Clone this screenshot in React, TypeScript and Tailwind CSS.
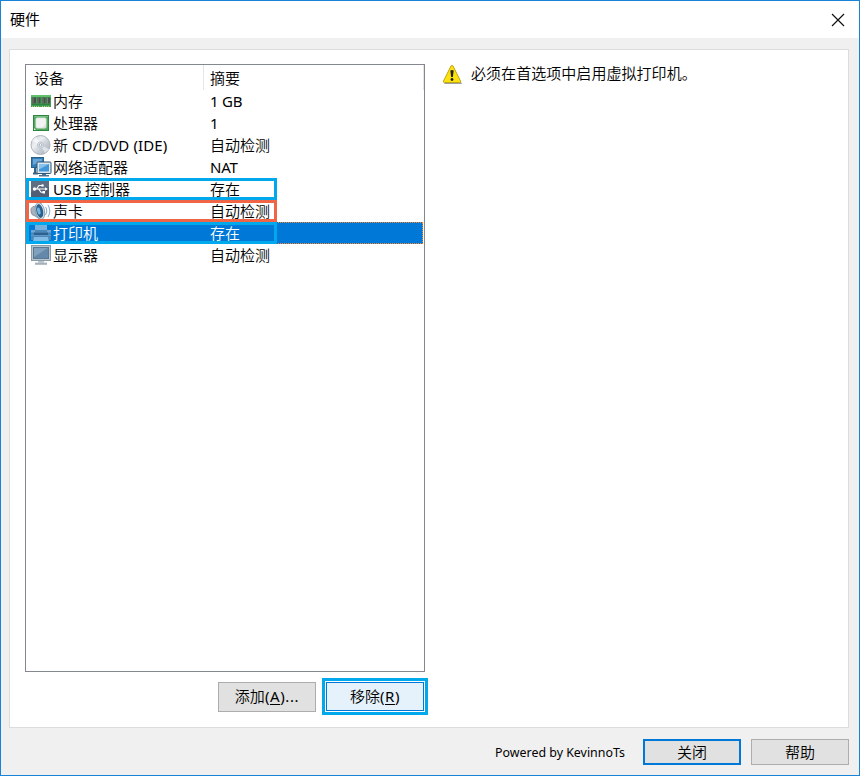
import type { ReactNode } from 'react'

type Device = {
  name: string
  summary: string
  icon: ReactNode
  outline?: string
  selected?: boolean
}

function MemoryIcon() {
  return (
    <svg width="22" height="22" viewBox="0 0 22 22">
      <path d="M1 5h20v12H1z" fill="#3f9b50" />
      <path d="M1 5h20v2H1z" fill="#62bf6c" />
      <path d="M2 7.500h4v6H2zM7 7.500h3.500v6H7zM12 7.500h3.500v6H12zM16.500 7.500h3.500v6h-3.500z" fill="#48504a" />
      <path d="M3 7.500v6M8 7.500v6M13 7.500v6M17.500 7.500v6" stroke="#778078" />
      <path d="M2 14.500h18" stroke="#2b8541" />
      <path d="M2 16.500h8M12 16.500h8" stroke="#b7c987" strokeDasharray="1 1" />
    </svg>
  )
}

function ProcessorIcon() {
  return (
    <svg width="22" height="22" viewBox="0 0 22 22">
      <rect x="3.500" y="3.500" width="15" height="15" fill="#51a85c" stroke="#2f8542" />
      <path d="M4 4.500h14" stroke="#77bd7d" />
      <rect x="6" y="6" width="10" height="10" rx="1" fill="#f3f3f3" stroke="#dfe6df" />
      <path d="M12 16l4-4v4z" fill="#dadfda" />
      <path d="M4 16l2 2H4z" fill="#dff0cf" />
    </svg>
  )
}

function DiscIcon() {
  return (
    <svg width="22" height="22" viewBox="0 0 22 22">
      <defs>
        <linearGradient id="disc" x1="0" y1="0" x2="1" y2="1">
          <stop offset="0" stopColor="#c3c8cf" />
          <stop offset="0.35" stopColor="#eef0f3" />
          <stop offset="0.6" stopColor="#cbd0d7" />
          <stop offset="1" stopColor="#a4acb7" />
        </linearGradient>
      </defs>
      <circle cx="10.500" cy="11" r="9.500" fill="url(#disc)" stroke="#adb5bf" />
      <path d="M10.500 11L2 7a9 9 0 0 1 4-4z" fill="#fff" opacity="0.6" />
      <path d="M10.500 11l8.500 4a9 9 0 0 1-4 4z" fill="#fff" opacity="0.5" />
      <circle cx="10.500" cy="11" r="3" fill="#dfe3e8" stroke="#b3bbc5" strokeWidth="0.800" />
      <circle cx="10.500" cy="11" r="1.300" fill="#fff" stroke="#929ba8" strokeWidth="0.700" />
    </svg>
  )
}

function NetworkIcon() {
  return (
    <svg width="22" height="22" viewBox="0 0 22 22">
      <rect x="1.500" y="1.500" width="12" height="10" fill="#347eb8" stroke="#2c6289" />
      <path d="M3 3h9v2L3 9z" fill="#68a7d7" />
      <path d="M5 12v6M3 17.500h5" stroke="#386482" strokeWidth="2" />
      <rect x="7" y="6" width="14" height="11.500" rx="1" fill="#dce6ee" stroke="#315777" />
      <rect x="9" y="8" width="10" height="7.500" fill="#4196d8" />
      <path d="M9 8h10L9 13.500z" fill="#87c1ec" />
      <path d="M12 18h4v1h3v1.500H9V19h3z" fill="#4b7391" />
    </svg>
  )
}

function UsbIcon() {
  return (
    <svg width="22" height="22" viewBox="0 0 22 22">
      <rect x="1" y="2" width="18" height="17" rx="0.500" fill="#505f75" />
      <path d="M1 2h18v7L1 14z" fill="#5e6e83" />
      <path d="M4 11h11.500M6.500 11l2.500-3.500h3M8.500 11l2.500 3.200h2" fill="none" stroke="#fff" strokeWidth="1.100" />
      <circle cx="4.500" cy="11" r="1.700" fill="#fff" />
      <circle cx="12.500" cy="7.500" r="1.300" fill="#fff" />
      <path d="M12.500 13h2.500v2.500h-2.500zM15 9.200l3 1.800-3 1.800z" fill="#fff" />
    </svg>
  )
}

function SoundIcon() {
  return (
    <svg width="22" height="22" viewBox="0 0 22 22">
      <path d="M1 8.500q1-2 4-2.500l6-4v18l-6-4q-4-1-4-4z" fill="#a6b2be" stroke="#7e8d9c" strokeWidth="0.800" />
      <ellipse cx="10" cy="11" rx="4.500" ry="8.500" transform="rotate(-12 10 11)" fill="#dce5ed" stroke="#8696a5" strokeWidth="0.800" />
      <ellipse cx="9.700" cy="11" rx="3.400" ry="7" transform="rotate(-12 9.700 11)" fill="#28618f" />
      <ellipse cx="8.800" cy="11" rx="1.600" ry="3.500" transform="rotate(-12 8.800 11)" fill="#76b5df" />
      <path d="M15.500 7q2.500 4 0 8M18 5q3.500 6 0 12" fill="none" stroke="#8fb4d2" strokeWidth="1.100" />
    </svg>
  )
}

function PrinterIcon() {
  return (
    <svg width="22" height="22" viewBox="0 0 22 22">
      <path d="M5 2h12v8H5z" fill="#76b0df" />
      <path d="M1 8h20v10H1z" fill="#4b88ba" />
      <path d="M1 8h4v3h12V8h4v2.500H1z" fill="#72a5cf" />
      <path d="M4 10.500h14V13H4z" fill="#2b6090" />
      <path d="M4 15h14l1 5H3z" fill="#82bbe6" />
      <path d="M1 13.500h20" stroke="#6198c5" />
    </svg>
  )
}

function DisplayIcon() {
  return (
    <svg width="22" height="22" viewBox="0 0 22 22">
      <rect x="1.500" y="1.500" width="19" height="15" fill="#b8c6d2" stroke="#8b9baa" />
      <rect x="3.500" y="3.500" width="15" height="11" fill="#6388a9" stroke="#5a7890" />
      <path d="M4 4h14L4 13z" fill="#7fa1bd" />
      <path d="M8 17h6v1.500h3v2H5v-2h3z" fill="#bac4ce" />
      <path d="M5 20h12" stroke="#919da9" />
    </svg>
  )
}

function WarningIcon() {
  return (
    <svg width="21" height="21" viewBox="0 0 21 21">
      <path d="M11 2l9 18H2z" fill="#777" opacity="0.7" />
      <path d="M9 2q1-1.500 2 0l7.500 15q.5 1.500-1 1.500h-15q-1.500 0-1-1.500z" fill="#fbe310" stroke="#c4a515" />
      <path d="M8.300 6.500q1.700-1.200 3.400 0L10.900 13H9.100z" fill="#24220f" />
      <circle cx="10" cy="15.500" r="1.400" fill="#24220f" />
    </svg>
  )
}

const devices: Device[] = [
  { name: '内存', summary: '1 GB', icon: <MemoryIcon /> },
  { name: '处理器', summary: '1', icon: <ProcessorIcon /> },
  { name: '新 CD/DVD (IDE)', summary: '自动检测', icon: <DiscIcon /> },
  { name: '网络适配器', summary: 'NAT', icon: <NetworkIcon /> },
  { name: 'USB 控制器', summary: '存在', icon: <UsbIcon />, outline: 'border-[#00a8ec]' },
  { name: '声卡', summary: '自动检测', icon: <SoundIcon />, outline: 'border-[#ef6545]' },
  { name: '打印机', summary: '存在', icon: <PrinterIcon />, outline: 'border-[#00a8ec]', selected: true },
  { name: '显示器', summary: '自动检测', icon: <DisplayIcon /> },
]

// Latin runs are set a little heavier than the Chinese text beside them.
function Label({ text }: { text: string }) {
  return (
    <>
      {text.split(/([\x20-\x7e]+)/).map((part, index) =>
        index % 2 ? (
          <span key={index} className={`font-normal ${part.length > 6 ? 'tracking-[0.1px]' : 'tracking-[-0.2px]'}`}>
            {part}
          </span>
        ) : (
          part
        ),
      )}
    </>
  )
}

function DeviceRow({ device }: { device: Device }) {
  return (
    <div
      className={`relative flex h-[22px] w-[397px] items-center whitespace-pre pl-1 leading-[20px] ${
        device.selected ? 'bg-[#0078d7] text-white outline-1 -outline-offset-1 outline-dotted outline-[#ff8728]' : ''
      }`}
    >
      <span className="w-[23px] shrink-0">{device.icon}</span>
      <span className="w-[157px] shrink-0 pb-px">
        <Label text={device.name} />
      </span>
      <span className="pb-px">
        <Label text={device.summary} />
      </span>
      {device.outline && <span className={`absolute top-0 left-0 h-[22px] w-[251px] border-3 ${device.outline}`} />}
    </div>
  )
}

export default function App() {
  return (
    <div className="flex h-[776px] w-[860px] flex-col border border-[#1883d7] bg-[#f0f0f0] font-['Noto_Sans','Noto_Sans_CJK_SC',sans-serif] text-[15px] font-[350] text-black">
      <header className="flex h-[37px] shrink-0 items-center justify-between bg-white pr-[14px] pl-[9px]">
        <h1 className="font-normal">硬件</h1>
        <button aria-label="关闭窗口">
          <svg width="14" height="14" viewBox="0 0 14 14">
            <path d="M1 1l12 12M13 1L1 13" stroke="#111" strokeWidth="1.200" />
          </svg>
        </button>
      </header>

      <main className="mx-2 mt-[11px] mr-[10px] flex h-[679px] shrink-0 border border-[#dcdcdc] bg-white pt-[14px] pl-[15px]">
        <section className="w-[403px] shrink-0">
          <div className="h-[608px] w-[400px] border border-[#828790] bg-white">
            <div className="flex h-[25px] w-[398px] leading-[26px]">
              <span className="w-[178px] border-r border-[#e5e5e5] pl-2">设备</span>
              <span className="flex-1 border-r border-[#e5e5e5] pl-[6px]">摘要</span>
            </div>
            {devices.map((device) => (
              <DeviceRow key={device.name} device={device} />
            ))}
          </div>
          <div className="mt-[6px] flex items-center justify-end gap-[6px]">
            <button className="h-[30px] w-[98px] border border-[#adadad] bg-[#e1e1e1]">
              添加
              <span className="font-normal tracking-[0.6px]">
                (<u className="underline-offset-2">A</u>)...
              </span>
            </button>
            <div className="h-[37px] w-[106px] border-3 border-[#00a8ec] p-px">
              <button className="h-full w-full border border-[#0078d7] bg-[#e5f1fb]">
                移除
                <span className="font-normal tracking-[0.6px]">
                  (<u className="underline-offset-2">R</u>)
                </span>
              </button>
            </div>
          </div>
        </section>

        <section className="flex h-[21px] items-center gap-2 pl-[14px]">
          <WarningIcon />
          <p className="pb-1 leading-[20px] tracking-[0.05px]">必须在首选项中启用虚拟打印机。</p>
        </section>
      </main>

      <footer className="flex items-center justify-end pt-[11px] pr-[10px]">
        <span className="mr-[18px] pt-[3px] text-[12.4px] font-normal">Powered by KevinnoTs</span>
        <button className="mr-[10px] h-[26px] w-[98px] border-2 border-[#0078d7] bg-[#e1e1e1] leading-[20px]">关闭</button>
        <button className="h-[26px] w-[98px] border border-[#adadad] bg-[#e1e1e1] leading-[20px]">帮助</button>
      </footer>
    </div>
  )
}
